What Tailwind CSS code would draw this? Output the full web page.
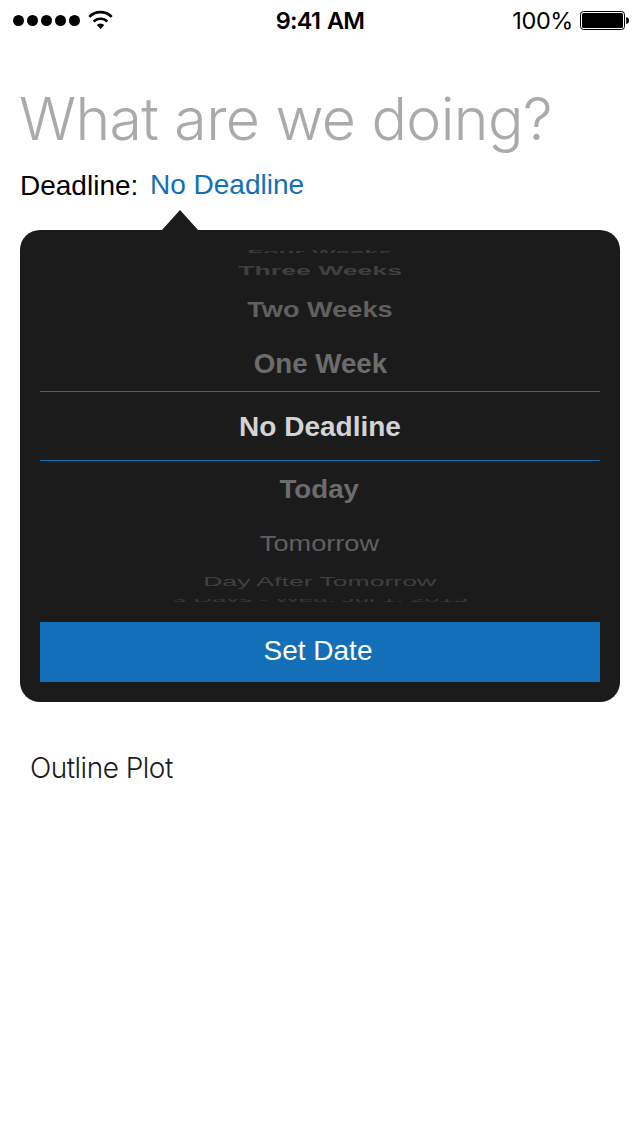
<!DOCTYPE html>
<html lang="en">
<head>
<meta charset="utf-8">
<title>New task</title>
<script src="https://cdn.jsdelivr.net/npm/@tailwindcss/browser@4"></script>
</head>
<body class="flex h-[1136px] w-[640px] flex-col overflow-hidden bg-white font-['Liberation_Sans',sans-serif] text-[28px] text-black">
  <header class="flex h-10 shrink-0 items-center font-['Inter',sans-serif] text-[23.5px]">
    <div class="flex flex-1 items-center">
      <svg class="h-10 w-[120px]" viewBox="0 0 120 40">
        <circle cx="18.5" cy="20.5" r="5.5"/><circle cx="32.5" cy="20.5" r="5.5"/><circle cx="46.5" cy="20.5" r="5.5"/><circle cx="60.5" cy="20.5" r="5.5"/><circle cx="74.5" cy="20.5" r="5.5"/>
        <path d="M89.300 16.800a15.700 15.700 0 0 1 22.400 0M93.700 21.600a9.600 9.600 0 0 1 13.600 0" fill="none" stroke="#000" stroke-width="2.600"/>
        <path d="M96.700 25a5.300 5.300 0 0 1 7.600 0L100.500 29Z"/>
      </svg>
    </div>
    <span class="mt-0.5 whitespace-nowrap font-semibold leading-10 tracking-[-0.7px] [word-spacing:1.5px]">9:41 AM</span>
    <div class="flex flex-1 items-center justify-end">
      <span class="mt-0.5 mr-[6px] leading-10 tracking-[-0.4px]">100%</span>
      <svg class="h-10 w-[61px]" viewBox="579 0 61 40">
        <rect x="580.5" y="11.500" width="44" height="18" rx="3" fill="none" stroke="#000"/>
        <rect x="582" y="13" width="41" height="15" rx="1.500"/>
        <path d="M626.200 17c2 .3 2.800 1.500 2.800 3.500s-.8 3.200-2.800 3.500Z"/>
      </svg>
    </div>
  </header>

  <main class="flex flex-col px-5">
    <h1 class="mt-[41px] -ml-px mb-px h-[76px] whitespace-nowrap font-['Inter',sans-serif] text-[59px] font-light leading-[76px] tracking-[-0.6px] text-[#aaaaaa]">What are we doing?</h1>
    <div class="mt-3 flex h-8 leading-8">
      <span class="w-[130px]">Deadline:</span>
      <span class="-mt-px text-[#136fb7]">No Deadline</span>
    </div>

    <svg class="mt-2 ml-[142px] h-5 w-9" viewBox="0 0 36 20"><path d="M18 0 36 20H0Z" fill="#1b1b1b"/></svg>
    <section class="flex h-[472px] flex-col rounded-[20px] bg-[#1b1b1b] px-5 pb-5">
      <div class="mt-5 mb-5 flex h-[352px] flex-col whitespace-nowrap text-center font-bold text-[#6c6c6c]">
        <div class="flex h-[3px] justify-center overflow-hidden text-[#3a3a3a]"><span class="block h-8 origin-top -translate-y-px scale-x-[0.92] scale-y-[0.25] leading-8">Four Weeks</span></div>
        <div class="flex h-[34px] items-center justify-center pt-0.5 text-[#404040]"><span class="scale-x-[0.95] scale-y-[0.48]">Three Weeks</span></div>
        <div class="flex h-[45px] items-center justify-center text-[#606060]"><span class="scale-x-[0.97] scale-y-[0.77]">Two Weeks</span></div>
        <div class="flex h-[59px] items-center justify-center pt-1"><span class="scale-x-[0.99] scale-y-[0.97]">One Week</span></div>
        <div class="flex h-[70px] items-center justify-center border-y border-[#136fb7] pt-0.5 text-[#d3d3d3]"><span>No Deadline</span></div>
        <div class="flex h-[56px] items-center justify-center pr-px"><span class="scale-x-[0.99] scale-y-[0.95]">Today</span></div>
        <div class="flex h-[53px] items-center justify-center pr-px font-normal text-[#606060]"><span class="scale-x-[0.97] scale-y-[0.77]">Tomorrow</span></div>
        <div class="flex h-[24px] items-center justify-center font-normal text-[#404040]"><span class="scale-x-[0.95] scale-y-[0.48]">Day After Tomorrow</span></div>
        <div class="mt-auto flex h-[3px] items-end justify-center overflow-hidden font-normal text-[#383838]"><span class="block h-8 shrink-0 origin-bottom translate-y-0.5 scale-x-[0.92] scale-y-[0.25] leading-8">3 Days - Wed. Jul 1, 2015</span></div>
      </div>
      <button class="h-[60px] shrink-0 bg-[#136fb7] pr-1 pb-[3px] text-white">Set Date</button>
    </section>

    <p class="mt-[46px] ml-2.5 font-['Inter',sans-serif] text-[28px] font-light leading-10 tracking-[-0.5px] text-[#1b1b1b]">Outline Plot</p>
  </main>
</body>
</html>
